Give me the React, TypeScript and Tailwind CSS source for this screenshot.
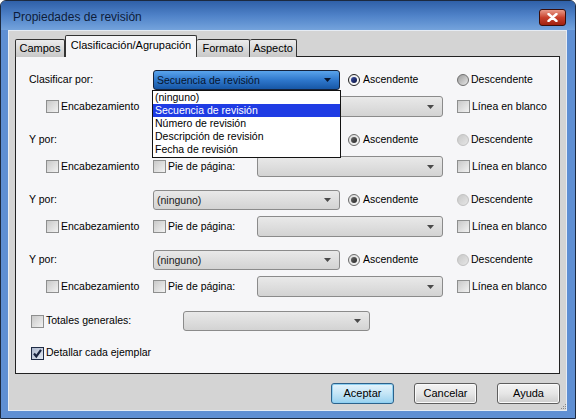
import React from 'react';

const items = ['(ninguno)', 'Secuencia de revisión', 'Número de revisión', 'Descripción de revisión', 'Fecha de revisión'];

function Check({ checked = false }: { checked?: boolean }) {
  return (
    <span
      className={`inline-flex h-[13px] w-[13px] shrink-0 items-center justify-center border ${
        checked
          ? 'border-[#1f2b45] bg-linear-to-br from-[#aab6cc] to-[#e4e9f2]'
          : 'border-[#8e8f8f] bg-linear-to-br from-[#c9c9c9] to-[#f2f2f2]'
      }`}
    >
      {checked && (
        <svg width="11" height="11" viewBox="0 0 11 11">
          <path d="M2 5.5 L4.3 8.5 L9 1.8" fill="none" stroke="#1a2440" strokeWidth="2.2" />
        </svg>
      )}
    </span>
  );
}

function Radio({ on = false, disabled = false }: { on?: boolean; disabled?: boolean }) {
  let ring = 'border-[#5a5a5a] bg-linear-to-br from-[#bdbdbd] to-[#f5f5f5]';
  let dot = '';
  if (on && !disabled) {
    ring = 'border-[#222] bg-linear-to-br from-[#e8e8e8] to-[#ffffff]';
    dot = 'bg-linear-to-br from-[#3a4fa8] to-[#0c1440]';
  } else if (on && disabled) {
    ring = 'border-[#6b6b6b] bg-linear-to-br from-[#dcdcdc] to-[#f5f5f5]';
    dot = 'bg-linear-to-br from-[#6a6a6a] to-[#2a2a2a]';
  } else if (!on && disabled) {
    ring = 'border-[#c2c2c2] bg-linear-to-br from-[#c8c8c8] to-[#e6e6e6]';
  } else {
    ring = 'border-[#6f6f6f] bg-linear-to-br from-[#9c9c9c] to-[#e8e8e8]';
  }
  return (
    <span className={`inline-flex h-[12px] w-[12px] shrink-0 items-center justify-center rounded-full border ${ring}`}>
      {dot && <span className={`h-[6px] w-[6px] rounded-full ${dot}`} />}
    </span>
  );
}

function Arrow({ color = '#3a3a3a' }: { color?: string }) {
  return (
    <svg width="7" height="4" viewBox="0 0 7 4" className="shrink-0">
      <path d="M0 0 L7 0 L3.5 4 Z" fill={color} />
    </svg>
  );
}

function Combo({ w, h = 20, text = '', focused = false }: { w: string; h?: number; text?: string; focused?: boolean }) {
  const base = focused
    ? 'border-[#15233c] bg-linear-to-b from-[#5aa4ec] via-[#2f78cc] to-[#1757a6]'
    : 'border-[#8b8b8b] bg-linear-to-b from-[#e9e9e9] to-[#d3d3d3]';
  return (
    <div
      className={`flex ${w} ${h === 21 ? 'h-[21px]' : 'h-[20px]'} shrink-0 items-center justify-between rounded-[3px] border pl-[3px] pr-[8px] ${base}`}
    >
      <span className={`leading-none ${focused ? 'text-[#06142e]' : 'text-[#1a1a1a]'}`}>{text}</span>
      <Arrow color={focused ? '#06142e' : '#4a4a4a'} />
    </div>
  );
}

function Group({ label, first = false, text = '' }: { label: string; first?: boolean; text?: string }) {
  return (
    <div className="mb-[13px] flex flex-col">
      <div className="flex h-[20px] items-center">
        <span className="w-[124px] shrink-0">{label}</span>
        <div className="relative">
          <Combo w="w-[187px]" focused={first} text={text} />
          {first && (
            <div className="absolute left-[-1px] top-[20px] z-20 w-[189px] border border-[#111] bg-white pb-[1px]">
              {items.map((it, i) => (
                <div
                  key={it}
                  className={`flex h-[13px] items-center pl-[2px] leading-none ${i === 1 ? 'bg-[#1f3ce4] text-white' : 'text-black'}`}
                >
                  {it}
                </div>
              ))}
            </div>
          )}
        </div>
        <div className="ml-[8px] flex w-[109px] items-center gap-[3px]">
          <Radio on disabled={!first} />
          <span>Ascendente</span>
        </div>
        <div className="flex items-center gap-[2px]">
          <Radio disabled={!first} />
          <span>Descendente</span>
        </div>
      </div>
      <div className="mt-[6px] flex h-[21px] items-center">
        <div className="ml-[17px] flex w-[107px] items-center gap-[2px]">
          <Check />
          <span>Encabezamiento</span>
        </div>
        {/* hidden under the open list in the first group */}
        <div className={`flex w-[104px] items-center gap-[2px] ${first ? 'invisible' : ''}`}>
          <Check />
          <span>Pie de página:</span>
        </div>
        <Combo w="w-[186px]" h={21} />
        <div className="ml-[14px] flex items-center gap-[2px]">
          <Check />
          <span>Línea en blanco</span>
        </div>
      </div>
    </div>
  );
}

function Button({ label, primary = false }: { label: string; primary?: boolean }) {
  return (
    <div
      className={`flex h-[21px] w-[63px] items-center justify-center rounded-[3px] border ${
        primary
          ? 'border-[#2c628b] bg-linear-to-b from-[#e5f4fc] via-[#c4e5f6] to-[#98d1ef] shadow-[inset_0_0_0_1px_#8fd0f2]'
          : 'border-[#5e5e5e] bg-linear-to-b from-[#f4f4f4] via-[#e6e6e6] to-[#cdcdcd] shadow-[inset_0_0_0_1px_#fafafa]'
      }`}
    >
      {label}
    </div>
  );
}

export default function App() {
  return (
    <div className="h-[419px] w-[576px] bg-white font-['Liberation_Sans',Arial,sans-serif] text-[10.5px] text-black">
      <div className="flex h-full w-full flex-col overflow-hidden rounded-t-[6px] border border-[#1c2a40] bg-[#5f8fd3]">
        {/* Title bar */}
        <div className="flex h-[29px] shrink-0 items-start justify-between bg-linear-to-b from-[#2f60a8] via-[#4f82c8] to-[#74a3dc] pl-[12px] pr-[9px]">
          <span className="mt-[10px] text-[12px] leading-none text-[#0d1c3a]">Propiedades de revisión</span>
          <div className="mt-[8px] flex h-[17px] w-[27px] items-center justify-center rounded-[3px] border border-[#3b0d08] bg-linear-to-b from-[#e89a8a] via-[#c8402c] to-[#a0200e]">
            <svg width="11" height="9" viewBox="0 0 11 9">
              <path d="M1.5 1 L9.5 8 M9.5 1 L1.5 8" stroke="#ffffff" strokeWidth="2.4" strokeLinecap="round" />
            </svg>
          </div>
        </div>

        {/* Client area */}
        <div className="relative mb-[7px] ml-[7px] mr-[8px] flex flex-1 flex-col bg-[#d4d4d4] px-[7px] pt-[5px] shadow-[inset_0_0_0_1px_#e6ecf4]">
          {/* Tabs */}
          <div className="relative z-10 -mb-px flex h-[22px] items-end text-[11px]">
            <div className="flex h-[18px] w-[50px] items-center justify-center rounded-t-[2px] border border-[#333] border-b-0 bg-linear-to-b from-[#ececec] to-[#c8c8c8]">
              Campos
            </div>
            <div className="flex h-[22px] w-[132px] items-center justify-center rounded-t-[2px] border border-[#333] border-b-0 bg-[#f6f6f8] pb-[3px]">
              Clasificación/Agrupación
            </div>
            <div className="flex h-[18px] w-[53px] items-center justify-center rounded-t-[2px] border border-[#333] border-b-0 border-l-0 bg-linear-to-b from-[#ececec] to-[#c8c8c8]">
              Formato
            </div>
            <div className="flex h-[18px] w-[47px] items-center justify-center rounded-t-[2px] border border-[#333] border-b-0 border-l-0 bg-linear-to-b from-[#ececec] to-[#c8c8c8]">
              Aspecto
            </div>
          </div>

          {/* Panel */}
          <div className="flex h-[318px] flex-col border border-[#222] bg-[#f6f6f8] pl-[13px] pt-[13px]">
            <Group label="Clasificar por:" first text="Secuencia de revisión" />
            <Group label="Y por:" />
            <Group label="Y por:" text="(ninguno)" />
            <Group label="Y por:" text="(ninguno)" />

            <div className="mt-[1px] flex h-[20px] items-center">
              <div className="ml-[2px] flex w-[152px] items-center gap-[2px]">
                <Check />
                <span>Totales generales:</span>
              </div>
              <Combo w="w-[187px]" />
            </div>
            <div className="mt-[12px] flex h-[20px] items-center">
              <div className="ml-[2px] flex items-center gap-[2px]">
                <Check checked />
                <span>Detallar cada ejemplar</span>
              </div>
            </div>
          </div>

          {/* Buttons */}
          <div className="mt-[9px] flex justify-end gap-[20px] text-[11px]">
            <Button label="Aceptar" primary />
            <Button label="Cancelar" />
            <Button label="Ayuda" />
          </div>

          {/* Size grip */}
          <svg width="6" height="6" viewBox="0 0 6 6" className="absolute bottom-[1px] right-[0px]">
            <rect x="4" y="0" width="1" height="1" fill="#888" />
            <rect x="2" y="2" width="1" height="1" fill="#888" />
            <rect x="4" y="2" width="1" height="1" fill="#888" />
            <rect x="0" y="4" width="1" height="1" fill="#888" />
            <rect x="2" y="4" width="1" height="1" fill="#888" />
            <rect x="4" y="4" width="1" height="1" fill="#888" />
          </svg>
        </div>
      </div>
    </div>
  );
}
